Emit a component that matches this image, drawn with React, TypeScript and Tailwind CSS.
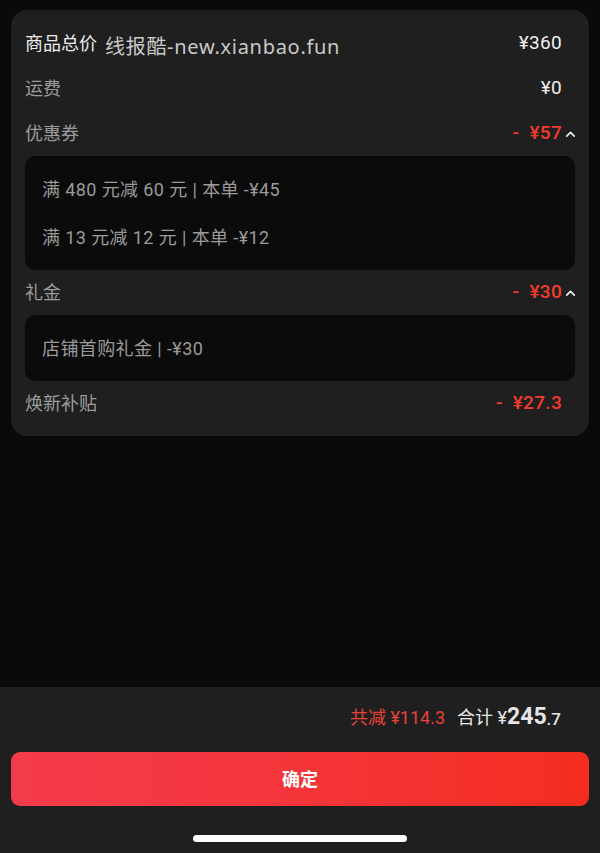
import React from 'react';

const SANS = "font-['Roboto','Noto_Sans_CJK_SC',sans-serif]";

const Chevron: React.FC = () => (
  <svg className="absolute left-full top-1/2 -translate-y-1/2 ml-[2px] h-[13px] w-[13px]" viewBox="0 0 12 12" fill="none">
    <path d="M2.5 8 L6 4.5 L9.5 8" stroke="#f2f2f2" strokeWidth="1.5" strokeLinecap="round" strokeLinejoin="round" />
  </svg>
);

const Row: React.FC<{ label: string; value: string; red?: boolean; chevron?: boolean }> = ({ label, value, red, chevron }) => (
  <div className="flex h-[45px] items-center justify-between">
    <span className="text-[18px] text-[#9c9c9c]">{label}</span>
    <span className={`relative mr-[13px] whitespace-pre text-[19px] tracking-[0.3px] ${red ? 'font-medium text-[#f23b2e]' : 'text-[#f0f0f0]'}`}>
      {value}
      {chevron && <Chevron />}
    </span>
  </div>
);

const DetailBox: React.FC<{ lines: string[] }> = ({ lines }) => (
  <div className="rounded-[10px] bg-[#0b0b0b] px-[17px] py-[9px]">
    {lines.map((line) => (
      <div key={line} className="flex h-12 items-center text-[18px] tracking-[0.4px] text-[#9a9a9a]">{line}</div>
    ))}
  </div>
);

export default function App() {
  return (
    <div className={`flex h-[853px] flex-col bg-[#0a0a0a] ${SANS}`}>
      <div className="mx-[11px] mt-[10px] rounded-[16px] bg-[#1f1f1f] px-[14px] pt-[11px] pb-[10px]">
        <div className="flex h-[45px] items-center justify-between">
          <div className="flex items-center">
            <span className="text-[18px] text-[#ececec]">商品总价</span>
            <span className="ml-[8px] mt-[6px] font-['Noto_Sans','Noto_Sans_CJK_SC',sans-serif] text-[20px] tracking-[0.7px] text-[#c9c9c9]">线报酷-new.xianbao.fun</span>
          </div>
          <span className="mr-[13px] text-[19px] tracking-[0.3px] text-[#f0f0f0]">¥360</span>
        </div>
        <Row label="运费" value="¥0" />
        <Row label="优惠券" value="-  ¥57" red chevron />
        <DetailBox lines={['满 480 元减 60 元 | 本单 -¥45', '满 13 元减 12 元 | 本单 -¥12']} />
        <Row label="礼金" value="-  ¥30" red chevron />
        <DetailBox lines={['店铺首购礼金 | -¥30']} />
        <Row label="焕新补贴" value="-  ¥27.3" red />
      </div>

      <div className="flex-1" />

      {/* bottom summary bar */}
      <div className="flex h-[166px] flex-col bg-[#1f1f1f] pt-[16px]">
        <div className="flex h-[28px] items-center justify-end pr-[39px]">
          <span className="whitespace-pre text-[18px] text-[#e8423a]">共减 ¥114.3</span>
          <span className="ml-[12px] whitespace-pre text-[18px] text-[#e6e6e6]">合计 ¥</span>
          <span className="text-[23px] font-bold text-[#e6e6e6]">245</span>
          <span className="mt-[5px] text-[17px] font-medium text-[#e6e6e6]">.7</span>
        </div>
        <button className="mx-[11px] mt-[21px] flex h-[54px] items-center justify-center rounded-[9px] bg-gradient-to-r from-[#f43b4c] to-[#f52d1f] text-[18px] font-bold text-white">
          确定
        </button>
        <div className="mx-auto mt-[29px] h-[7px] w-[214px] rounded-full bg-white" />
      </div>
    </div>
  );
}
